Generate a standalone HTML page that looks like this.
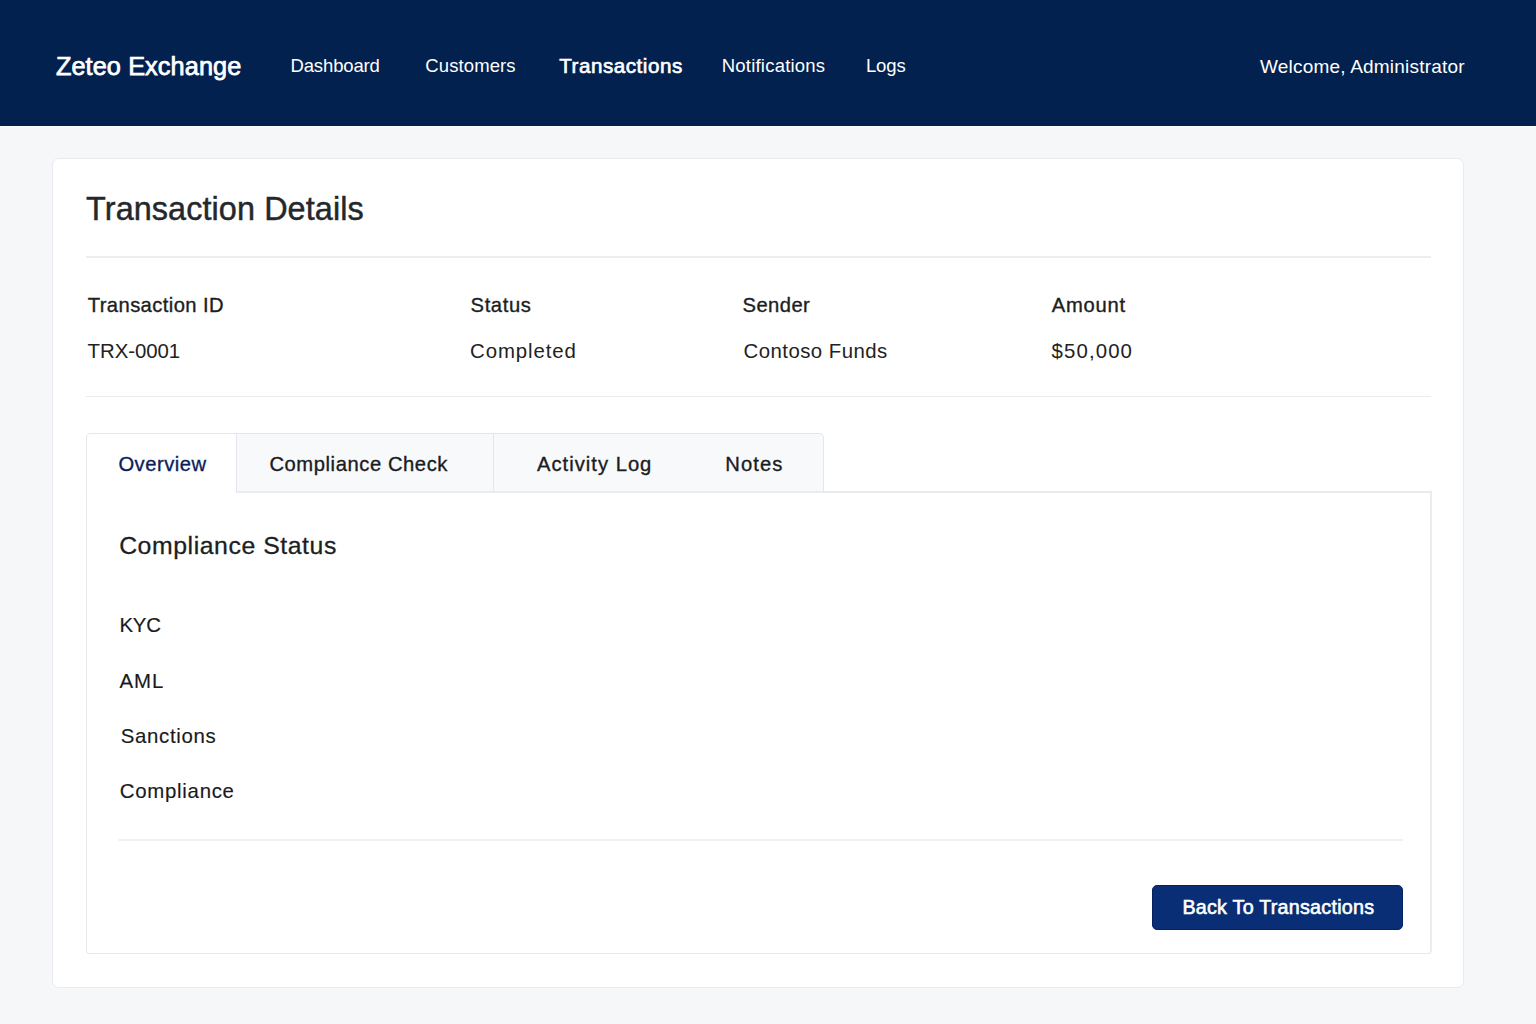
<!DOCTYPE html>
<html lang="en">
<head>
<meta charset="utf-8">
<title>Zeteo Exchange - Transaction Details</title>
<style>
  html,body{margin:0;padding:0;}
  body{width:1536px;height:1024px;overflow:hidden;background:#f6f7f9;font-family:"Liberation Sans",sans-serif;position:relative;}
  .abs{position:absolute;box-sizing:border-box;}
  .t{position:absolute;line-height:1;white-space:nowrap;font-family:"Liberation Sans",sans-serif;}
  #hdr{left:0;top:0;width:1536px;height:126px;background:#02214f;}
  #hdrline{left:0;top:126px;width:1536px;height:1px;background:#fafbfc;}
  #card{left:52px;top:158px;width:1412px;height:830px;background:#fff;border:1px solid #e9ebee;border-radius:7px;}
  .hr{height:2px;background:#eceef0;}
  #hr1{left:86px;top:256px;width:1345px;}
  #hr2{left:86px;top:396px;width:1345px;height:1px;background:#e9ebed;}
  #panel{left:86px;top:491px;width:1346px;height:463px;background:#fff;border:1px solid #e5e8ec;border-top:2px solid #e9ecef;border-right:2px solid #eaedf0;border-radius:0 0 4px 4px;}
  #tabs{left:86px;top:433px;width:738px;height:60px;background:#f8f9fa;border:1px solid #e3e6ea;border-bottom:2px solid #e9ecef;border-radius:5px 5px 0 0;}
  #tab1{left:87px;top:434px;width:149px;height:60px;background:#fff;border-radius:4px 0 0 0;}
  #tab1r{left:236px;top:434px;width:1px;height:58px;background:#e3e6ea;}
  #tabdiv{left:493px;top:434px;width:1px;height:57px;background:#e3e6ea;}
  #hr3{left:118px;top:839px;width:1285px;height:2px;background:#eef0f2;}
  #btn{left:1152px;top:885px;width:251px;height:45px;background:#092e75;border:1px solid #06225e;border-radius:5px;}
</style>
</head>
<body>
<div id="hdr" class="abs"></div>
<div id="hdrline" class="abs"></div>
<div id="card" class="abs"></div>
<div id="hr1" class="abs hr"></div>
<div id="hr2" class="abs hr"></div>
<div id="panel" class="abs"></div>
<div id="tabs" class="abs"></div>
<div id="tab1" class="abs"></div>
<div id="tab1r" class="abs"></div>
<div id="tabdiv" class="abs"></div>
<div id="hr3" class="abs"></div>
<div id="btn" class="abs"></div>
<header>
<nav>
<span class="t" style="left:55.88px;top:54.48px;font-size:25.3px;font-weight:400;color:#fff;letter-spacing:0.091px;-webkit-text-stroke:0.75px #fff;">Zeteo Exchange</span>
<span class="t" style="left:290.50px;top:57.24px;font-size:18.5px;font-weight:400;color:#fff;letter-spacing:-0.139px;">Dashboard</span>
<span class="t" style="left:425.30px;top:57.24px;font-size:18.5px;font-weight:400;color:#fff;letter-spacing:0.102px;">Customers</span>
<span class="t" style="left:559.23px;top:56.16px;font-size:20.6px;font-weight:400;color:#fff;letter-spacing:0.538px;-webkit-text-stroke:0.65px #fff;">Transactions</span>
<span class="t" style="left:721.80px;top:57.24px;font-size:18.5px;font-weight:400;color:#fff;letter-spacing:0.207px;">Notifications</span>
<span class="t" style="left:865.90px;top:57.24px;font-size:18.5px;font-weight:400;color:#fff;letter-spacing:-0.055px;">Logs</span>
<span class="t" style="left:1260.00px;top:56.92px;font-size:19px;font-weight:400;color:#fff;letter-spacing:0.205px;">Welcome, Administrator</span>
</nav>
</header>
<main>
<span class="t" style="left:86.12px;top:192.97px;font-size:32.4px;font-weight:400;color:#24272b;letter-spacing:0.084px;-webkit-text-stroke:0.45px #24272b;">Transaction Details</span>
<span class="t" style="left:87.77px;top:294.90px;font-size:20.2px;font-weight:400;color:#1c1e21;letter-spacing:0.401px;-webkit-text-stroke:0.35px #1c1e21;">Transaction ID</span>
<span class="t" style="left:87.60px;top:340.73px;font-size:20.4px;font-weight:400;color:#222;letter-spacing:-0.056px;">TRX-0001</span>
<span class="t" style="left:470.57px;top:294.90px;font-size:20.2px;font-weight:400;color:#1c1e21;letter-spacing:0.603px;-webkit-text-stroke:0.35px #1c1e21;">Status</span>
<span class="t" style="left:470.00px;top:340.73px;font-size:20.4px;font-weight:400;color:#222;letter-spacing:0.917px;">Completed</span>
<span class="t" style="left:742.47px;top:294.90px;font-size:20.2px;font-weight:400;color:#1c1e21;letter-spacing:0.455px;-webkit-text-stroke:0.35px #1c1e21;">Sender</span>
<span class="t" style="left:743.50px;top:340.73px;font-size:20.4px;font-weight:400;color:#222;letter-spacing:0.459px;">Contoso Funds</span>
<span class="t" style="left:1051.77px;top:294.90px;font-size:20.2px;font-weight:400;color:#1c1e21;letter-spacing:0.777px;-webkit-text-stroke:0.35px #1c1e21;">Amount</span>
<span class="t" style="left:1051.60px;top:340.73px;font-size:20.4px;font-weight:400;color:#222;letter-spacing:1.106px;">$50,000</span>
<span class="t" style="left:118.38px;top:454.20px;font-size:20.2px;font-weight:400;color:#0b1f5c;letter-spacing:0.514px;-webkit-text-stroke:0.35px #0b1f5c;">Overview</span>
<span class="t" style="left:269.38px;top:454.20px;font-size:20.2px;font-weight:400;color:#1a1c1f;letter-spacing:0.575px;-webkit-text-stroke:0.35px #1a1c1f;">Compliance Check</span>
<span class="t" style="left:536.97px;top:454.20px;font-size:20.2px;font-weight:400;color:#1a1c1f;letter-spacing:1.014px;-webkit-text-stroke:0.35px #1a1c1f;">Activity Log</span>
<span class="t" style="left:725.27px;top:454.20px;font-size:20.2px;font-weight:400;color:#1a1c1f;letter-spacing:1.077px;-webkit-text-stroke:0.35px #1a1c1f;">Notes</span>
<span class="t" style="left:119.15px;top:534.01px;font-size:24.8px;font-weight:400;color:#1c1e21;letter-spacing:0.567px;-webkit-text-stroke:0.3px #1c1e21;">Compliance Status</span>
<span class="t" style="left:119.38px;top:615.03px;font-size:20.4px;font-weight:400;color:#1a1a1a;letter-spacing:-0.175px;-webkit-text-stroke:0.15px #1a1a1a;">KYC</span>
<span class="t" style="left:119.58px;top:670.73px;font-size:20.4px;font-weight:400;color:#1a1a1a;letter-spacing:0.882px;-webkit-text-stroke:0.15px #1a1a1a;">AML</span>
<span class="t" style="left:120.78px;top:725.73px;font-size:20.4px;font-weight:400;color:#1a1a1a;letter-spacing:0.662px;-webkit-text-stroke:0.15px #1a1a1a;">Sanctions</span>
<span class="t" style="left:119.78px;top:781.33px;font-size:20.4px;font-weight:400;color:#1a1a1a;letter-spacing:0.725px;-webkit-text-stroke:0.15px #1a1a1a;">Compliance</span>
<span class="t" style="left:1182.40px;top:897.82px;font-size:19.7px;font-weight:400;color:#fff;letter-spacing:0.256px;-webkit-text-stroke:0.6px #fff;">Back To Transactions</span>
</main>
</body>
</html>
